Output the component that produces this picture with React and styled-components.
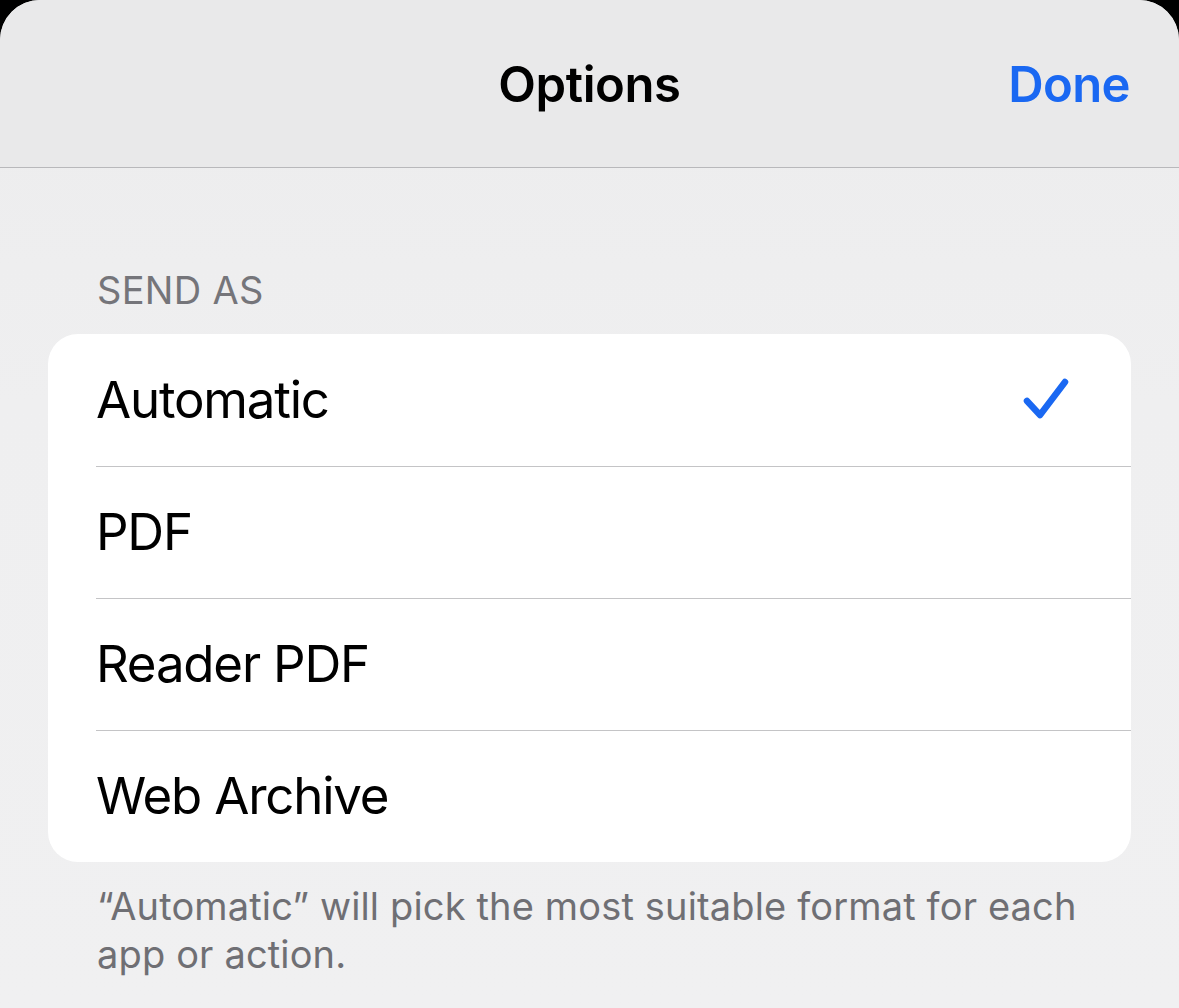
import React from "react";
import styled, { createGlobalStyle } from "styled-components";

const Global = createGlobalStyle`
  html, body { margin: 0; padding: 0; background: #000; }
  body { font-family: Inter, "Noto Sans", sans-serif; -webkit-font-smoothing: antialiased; }
  #root { width: 1179px; height: 1008px; overflow: hidden; }
`;

const Sheet = styled.div`
  width: 1179px;
  height: 1008px;
  background: linear-gradient(180deg, #ececed 0%, #efeff0 40%, #f0f0f1 100%);
  border-radius: 40px 40px 0 0;
  overflow: hidden;
  display: flex;
  flex-direction: column;
`;

const Header = styled.header`
  height: 167px;
  border-bottom: 1.5px solid #b8b8bb;
  display: grid;
  grid-template-columns: 1fr auto 1fr;
  align-items: center;
  padding: 0 48px 0 48px;
  background: #e9e9ea;
`;

const Title = styled.h1`
  grid-column: 2;
  margin: 0;
  font-size: 49px;
  font-weight: 600;
  color: #000;
  letter-spacing: -0.4px;
  padding-top: 2px;
`;

const DoneButton = styled.button`
  grid-column: 3;
  justify-self: end;
  border: 0;
  background: none;
  padding: 2px 1px 0 0;
  font-family: inherit;
  font-size: 49px;
  font-weight: 600;
  color: #1a68f2;
  letter-spacing: -0.6px;
`;

const Content = styled.main`
  padding: 102px 48px 0 48px;
  display: flex;
  flex-direction: column;
`;

const SectionLabel = styled.div`
  padding-left: 49px;
  font-size: 38px;
  color: #75757a;
  letter-spacing: 0.3px;
  line-height: 40px;
  margin-bottom: 24px;
`;

const Card = styled.div`
  background: #fff;
  border-radius: 30px;
  overflow: hidden;
  width: 1083px;
`;

const Row = styled.div`
  height: 132px;
  margin-left: 48px;
  padding-right: 60px;
  display: flex;
  align-items: center;
  justify-content: space-between;
  border-top: ${(p) => (p.$first ? "none" : "1.5px solid #c4c4c6")};
  box-sizing: border-box;
`;

const RowLabel = styled.span`
  font-size: 51px;
  color: #000;
  letter-spacing: -1.2px;
  padding-bottom: 2px;
`;

const Footer = styled.p`
  margin: 20px 0 0 0;
  padding: 0 20px 0 49px;
  font-size: 38px;
  line-height: 48px;
  color: #6f6f74;
  letter-spacing: 0.15px;
`;

const Check = () => (
  <svg width="50" height="50" viewBox="0 0 50 50" aria-hidden="true">
    <path
      d="M6 26 L19 40 L44 7"
      fill="none"
      stroke="#1a68f2"
      strokeWidth="6.5"
      strokeLinecap="round"
      strokeLinejoin="round"
    />
  </svg>
);

const options = ["Automatic", "PDF", "Reader PDF", "Web Archive"];

export default function App() {
  return (
    <>
      <Global />
      <Sheet>
        <Header>
          <Title>Options</Title>
          <DoneButton>Done</DoneButton>
        </Header>
        <Content>
          <SectionLabel>SEND AS</SectionLabel>
          <Card>
            {options.map((o, i) => (
              <Row key={o} $first={i === 0}>
                <RowLabel>{o}</RowLabel>
                {i === 0 && <Check />}
              </Row>
            ))}
          </Card>
          <Footer>
            “Automatic” will pick the most suitable format for each app or action.
          </Footer>
        </Content>
      </Sheet>
    </>
  );
}
